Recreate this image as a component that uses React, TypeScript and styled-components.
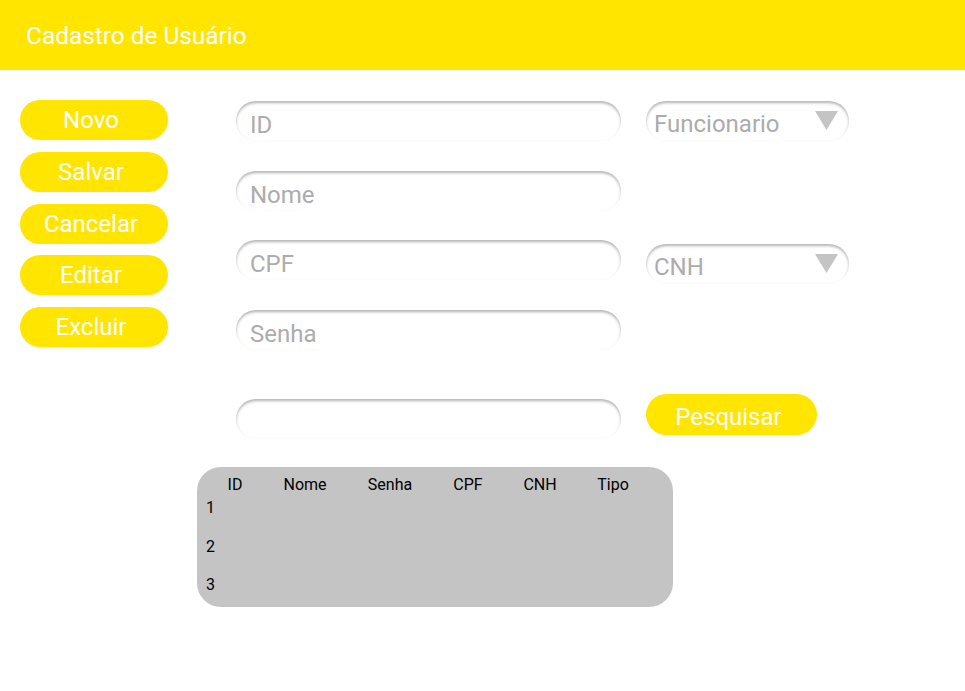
import styled, { createGlobalStyle } from 'styled-components';

const GlobalStyle = createGlobalStyle`
  body {
    margin: 0;
    background: #ffffff;
    font-family: Roboto, 'Liberation Sans', sans-serif;
  }
  * {
    box-sizing: border-box;
  }
`;

const actions = ['Novo', 'Salvar', 'Cancelar', 'Editar', 'Excluir'];
const columns = [
  { label: 'ID', width: 50 },
  { label: 'Nome', width: 90 },
  { label: 'Senha', width: 80 },
  { label: 'CPF', width: 76 },
  { label: 'CNH', width: 68 },
  { label: 'Tipo', width: 78 },
];
const rows = [1, 2, 3];

const Caret = () => (
  <StyledCaret viewBox="0 0 23 19">
    <path d="M0 0 H23 L11.5 19 Z" fill="#c4c4c4" />
  </StyledCaret>
);

const App = () => {
  return (
    <>
      <GlobalStyle />
      <StyledTopBar>
        <StyledTitle>Cadastro de Usuário</StyledTitle>
      </StyledTopBar>
      <StyledMain>
        <StyledActions>
          {actions.map((a) => (
            <StyledActionBtn key={a}>{a}</StyledActionBtn>
          ))}
        </StyledActions>
        <StyledContent>
          <StyledForm>
            <StyledRow>
              <StyledField placeholder="ID" />
              <StyledSelect>
                <span>Funcionario</span>
                <Caret />
              </StyledSelect>
            </StyledRow>
            <StyledRow>
              <StyledField placeholder="Nome" />
            </StyledRow>
            <StyledRow>
              <StyledField placeholder="CPF" />
              <StyledSelect $shift={4}>
                <span>CNH</span>
                <Caret />
              </StyledSelect>
            </StyledRow>
            <StyledRow>
              <StyledField placeholder="Senha" />
            </StyledRow>
            <StyledSearchRow>
              <StyledField />
              <StyledSearchBtn>Pesquisar</StyledSearchBtn>
            </StyledSearchRow>
          </StyledForm>
          <StyledTable>
            <StyledHead>
              {columns.map((c) => (
                <StyledHeadCell key={c.label} $w={c.width}>
                  {c.label}
                </StyledHeadCell>
              ))}
            </StyledHead>
            <StyledBody>
              {rows.map((r) => (
                <StyledBodyRow key={r}>{r}</StyledBodyRow>
              ))}
            </StyledBody>
          </StyledTable>
        </StyledContent>
      </StyledMain>
    </>
  );
};

const StyledTopBar = styled.header`
  height: 70px;
  background: #ffe500;
  display: flex;
  align-items: center;
  padding-left: 26px;
`;

const StyledTitle = styled.h1`
  margin: 0;
  font-size: 24.4px;
  font-weight: 400;
  color: #ffffff;
`;

const StyledMain = styled.main`
  display: flex;
  align-items: flex-start;
  padding: 30px 0 0 20px;
`;

const StyledActions = styled.div`
  display: flex;
  flex-direction: column;
  gap: 11.75px;
  width: 148px;
`;

const StyledActionBtn = styled.button`
  height: 40px;
  border: none;
  border-radius: 20px;
  background: #ffe500;
  color: #ffffff;
  font-family: Roboto, 'Liberation Sans', sans-serif;
  font-size: 24px;
  padding: 0 6px 0 0;
`;

const StyledContent = styled.div`
  margin-left: 29px;
  display: flex;
  flex-direction: column;
`;

const StyledForm = styled.div`
  display: flex;
  flex-direction: column;
  gap: 29.5px;
  padding: 1px 0 0 39px;
`;

const StyledRow = styled.div`
  display: flex;
  align-items: flex-start;
  gap: 25px;
  height: 40px;
`;

const StyledSearchRow = styled(StyledRow)`
  align-items: flex-end;
  height: 45px;
  margin-top: 15px;
`;

const StyledField = styled.input`
  width: 385px;
  height: 40px;
  border: none;
  border-radius: 20px;
  background: #ffffff;
  box-shadow: inset 0 2px 3px rgba(0, 0, 0, 0.3);
  padding: 8px 14px 0;
  font-family: Roboto, 'Liberation Sans', sans-serif;
  font-size: 24px;
  color: #555555;
  outline: none;

  &::placeholder {
    color: #acacac;
  }
`;

const StyledSelect = styled.div<{ $shift?: number }>`
  flex-shrink: 0;
  width: 203px;
  height: 40px;
  margin-top: ${({ $shift }) => $shift ?? 0}px;
  border-radius: 20px;
  box-shadow: inset 0 2px 3px rgba(0, 0, 0, 0.3);
  display: flex;
  align-items: center;
  justify-content: space-between;
  padding: 6px 11px 0 8px;
  font-size: 24px;
  color: #acacac;
`;

const StyledCaret = styled.svg`
  width: 23px;
  height: 19px;
  margin-top: -8px;
`;

const StyledSearchBtn = styled.button`
  width: 171px;
  height: 41px;
  margin-bottom: 4px;
  border: none;
  border-radius: 21px;
  background: #ffe500;
  color: #ffffff;
  font-family: Roboto, 'Liberation Sans', sans-serif;
  font-size: 24px;
  padding: 4px 6px 0 0;
`;

const StyledTable = styled.div`
  margin-top: 28px;
  width: 476px;
  height: 140px;
  border-radius: 24px;
  background: #c4c4c4;
  padding: 9px 0 0 9px;
  font-size: 16px;
  color: #000000;
`;

const StyledHead = styled.div`
  display: flex;
  padding-left: 4px;
  line-height: 18px;
`;

const StyledHeadCell = styled.div<{ $w: number }>`
  width: ${({ $w }) => $w}px;
  text-align: center;
`;

const StyledBody = styled.div`
  display: flex;
  flex-direction: column;
  gap: 20.5px;
  margin-top: 5px;
`;

const StyledBodyRow = styled.div`
  line-height: 18px;
`;

export default App;
